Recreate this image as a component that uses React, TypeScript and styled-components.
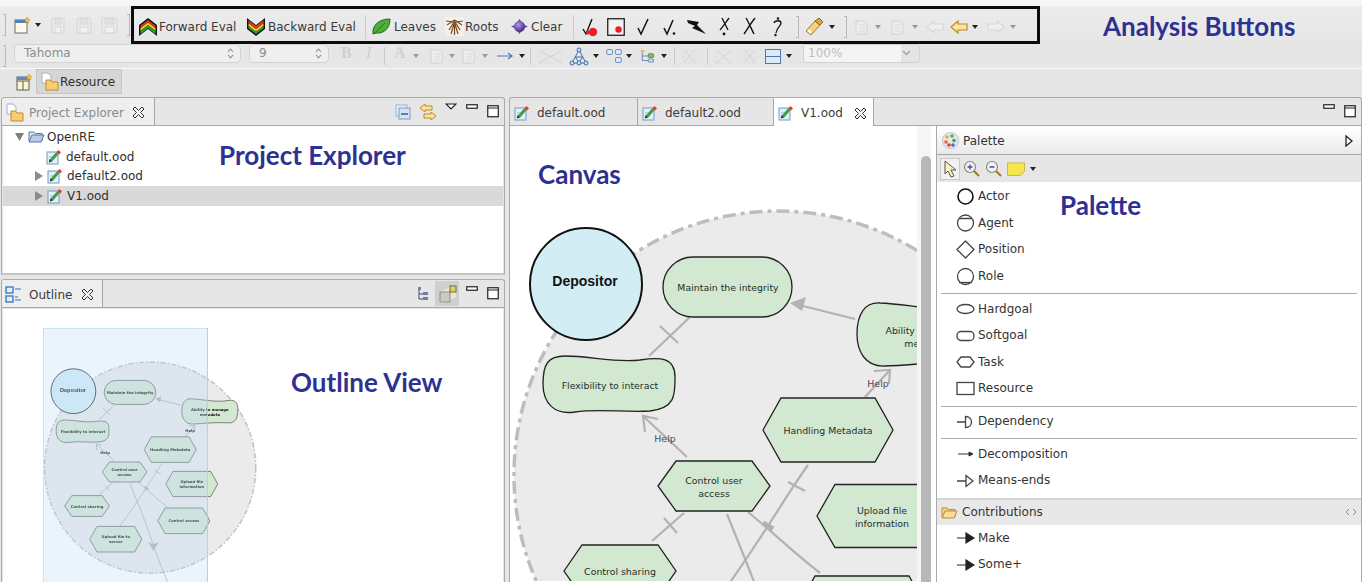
import React from 'react'
import styled, { createGlobalStyle } from 'styled-components'

const GlobalStyle = createGlobalStyle`
  html, body { margin: 0; padding: 0; background: #e6e6e6; }
  body { font-family: "DejaVu Sans", "Liberation Sans", sans-serif; }
`

const UI_FONT = '"DejaVu Sans", "Liberation Sans", sans-serif'

const Page = styled.div`
  width: 1362px;
  height: 582px;
  overflow: hidden;
  background: #e6e6e6;
  display: flex;
  flex-direction: column;
  color: #2b2b2b;
  font-size: 12px;
`

const TopRow = styled.div`
  height: 38px;
  margin-top: 6px;
  padding-left: 3px;
  display: flex;
  align-items: center;
  background: linear-gradient(#ececec, #e6e6e6);
  box-shadow: 0 -6px 0 #f6f6f6;
`

const FormatRow = styled.div`
  height: 24px;
  padding-left: 3px;
  display: flex;
  align-items: center;
`

const PerspectiveRow = styled.div`
  height: 29px;
  border-top: 1px solid #fafafa;
  display: flex;
  align-items: flex-start;
  padding-left: 16px;
  box-sizing: border-box;
`

const AnalysisBox = styled.div`
  width: 909px;
  height: 38px;
  margin-left: 1px;
  padding-top: 3px;
  box-sizing: border-box;
  border: 3px solid #0c0c0c;
  display: flex;
  align-items: center;
  position: relative;
  z-index: 2;
  flex: none;
`

const Slot = styled.svg<{ $gap?: number }>`
  flex: none;
  margin-left: ${p => p.$gap ?? 0}px;
  display: block;
`

const ToolLabel = styled.span<{ $gap: number; $w: number }>`
  flex: none;
  margin-left: ${p => p.$gap}px;
  width: ${p => p.$w}px;
  white-space: nowrap;
  font-size: 12px;
  color: #3a3a3a;
`

const Divider = styled.div<{ $gap: number; $tall?: number }>`
  flex: none;
  margin-left: ${p => p.$gap}px;
  width: 1px;
  height: ${p => p.$tall ?? 24}px;
  background: #cacaca;
`

const Handle = styled.div<{ $gap: number }>`
  flex: none;
  margin-left: ${p => p.$gap}px;
  width: 3px;
  height: 22px;
  box-sizing: border-box;
  border: 1px solid #b8b8b8;
  border-left: none;
`

const Caret = styled.div<{ $gap: number; $pale?: boolean }>`
  flex: none;
  margin-left: ${p => p.$gap}px;
  width: 0;
  height: 0;
  border-left: 3px solid transparent;
  border-right: 3px solid transparent;
  border-top: 4px solid ${p => (p.$pale ? '#9a9a9a' : '#222')};
`

const Annotation = styled.div`
  font-family: "Lato", "Open Sans", sans-serif;
  font-weight: 700;
  font-size: 26px;
  line-height: 30px;
  color: #2e3192;
  white-space: nowrap;
`

const AnalysisTitle = styled(Annotation)`
  margin-left: 63px;
  margin-top: 2px;
`

const FloatNote = styled(Annotation)<{ $x: number; $y: number }>`
  position: absolute;
  left: ${p => p.$x}px;
  top: ${p => p.$y}px;
  z-index: 3;
`

const Combo = styled.div<{ $gap: number; $w: number }>`
  flex: none;
  margin-left: ${p => p.$gap}px;
  margin-top: -6px;
  width: ${p => p.$w}px;
  height: 19px;
  box-sizing: border-box;
  padding: 0 6px 0 9px;
  background: #efefef;
  border: 1px solid #d2d2d2;
  border-radius: 5px;
  display: flex;
  align-items: center;
  justify-content: space-between;
  color: #8c8c8c;
  font-size: 12px;
`

const ZoomCombo = styled(Combo)`
  background: linear-gradient(90deg, #f4f4f4 84%, #e4e4e4 84%);
  color: #bdbdbd;
  padding: 0 8px 0 4px;
  border-radius: 3px;
`

const FakeStyleBtn = styled.span<{ $gap: number; $italic?: boolean }>`
  flex: none;
  margin-left: ${p => p.$gap}px;
  margin-top: -6px;
  width: 12px;
  font-family: "Liberation Serif", serif;
  font-size: 16px;
  font-weight: ${p => (p.$italic ? 400 : 700)};
  font-style: ${p => (p.$italic ? 'italic' : 'normal')};
  color: #d0d0d0;
`

const ResourceBtn = styled.div`
  margin-left: 4px;
  margin-top: 0;
  width: 86px;
  height: 25px;
  box-sizing: border-box;
  background: #d6d6d6;
  border: 1px solid #c6c6c6;
  display: flex;
  align-items: center;
  padding-left: 3px;
  color: #2f2f2f;
  font-size: 12px;
`

const Workspace = styled.div`
  flex: 1;
  min-height: 0;
  display: grid;
  grid-template-columns: 505px 853px;
  column-gap: 4px;
  padding-left: 0;
`

const LeftStack = styled.div`
  display: grid;
  grid-template-rows: 178px 1fr;
  row-gap: 4px;
  padding-left: 1px;
  min-height: 0;
  height: 485px;
`

const Panel = styled.section`
  position: relative;
  border: 1px solid #ababab;
  border-bottom: none;
  border-radius: 3px 3px 0 0;
  background: #e6e6e6;
  display: flex;
  flex-direction: column;
  min-height: 0;
  overflow: hidden;
`

const FramedPanel = styled(Panel)`
  border-bottom: 2px solid #c4c4c4;
`

const TabBar = styled.div`
  height: 28px;
  flex: none;
  display: flex;
  align-items: stretch;
  border-bottom: 1px solid #a8a8a8;
  box-sizing: border-box;
`

const Tab = styled.div<{ $w: number; $active?: boolean; $muted?: boolean }>`
  flex: none;
  width: ${p => p.$w}px;
  box-sizing: border-box;
  display: flex;
  align-items: center;
  padding: 2px 0 0 4px;
  gap: 7px;
  border-right: 1px solid #a8a8a8;
  margin-bottom: ${p => (p.$active ? '-1px' : '0')};
  background: ${p => (p.$active ? '#fff' : 'transparent')};
  color: ${p => (p.$muted ? '#8a8a8a' : '#3a3a3a')};
  font-size: 12px;
  white-space: nowrap;
`

const SideTab = styled(Tab)`
  background: #eeeeee;
  gap: 4px;
  padding-left: 3px;
`

const TabActions = styled.div`
  margin-left: auto;
  display: flex;
  align-items: center;
  padding-right: 5px;
`

const ToggleWrap = styled.div`
  width: 24px;
  height: 25px;
  margin-left: 6px;
  background: #cfcfcf;
  display: flex;
  align-items: center;
  justify-content: center;
`

const TreeArea = styled.div`
  position: relative;
  flex: 1;
  background: #fff;
  margin: 0 1px;
  padding-top: 1px;
`

const TreeRow = styled.div<{ $indent: number; $selected?: boolean }>`
  height: 19.8px;
  display: flex;
  align-items: center;
  padding-left: ${p => p.$indent}px;
  gap: 4px;
  background: ${p => (p.$selected ? '#d9d9d9' : 'transparent')};
  color: #2e2e2e;
  font-size: 12px;
`

const OutlineArea = styled.div`
  position: relative;
  flex: 1;
  background: #fff;
  margin: 1px 1px 0;
  padding: 19px 0 0 40px;
  overflow: hidden;
`

// the thumbnail is a shrunken copy, its labels read as dark smudges
const OutlineSvg = styled.svg`
  display: block;
  filter: blur(0.3px);
  text {
    font-weight: 700;
    fill: #111;
  }
`

const EditorBody = styled.div`
  flex: 1;
  display: flex;
  min-height: 0;
  background: #fff;
`

const Canvas = styled.div`
  position: relative;
  width: 407px;
  flex: none;
  overflow: hidden;
`

const ScrollTrack = styled.div`
  width: 14px;
  flex: none;
  background: #f6f6f6;
  padding: 30px 0 0 4px;
  box-sizing: border-box;
`

const ScrollThumb = styled.div`
  width: 10px;
  height: 100%;
  background: #b7b7b7;
  border-radius: 5px 5px 0 0;
`

const Sash = styled.div`
  width: 5px;
  flex: none;
  background: #fff;
  border-right: 1px solid #a9a9a9;
`

const Palette = styled.aside`
  position: relative;
  flex: 1;
  display: flex;
  flex-direction: column;
  background: #fff;
  padding-top: 1px;
`

const PaletteHead = styled.div`
  height: 28px;
  flex: none;
  box-sizing: border-box;
  display: flex;
  align-items: center;
  padding: 0 8px 0 5px;
  gap: 4px;
  background: linear-gradient(#fff, #e9e9e9);
  border-bottom: 1px solid #a6a6a6;
  font-size: 12px;
  color: #333;
`

const PaletteTools = styled.div`
  height: 27px;
  flex: none;
  display: flex;
  align-items: center;
  background: #e6e6e6;
  padding-left: 3px;
`

const SelectTool = styled.div`
  width: 20px;
  height: 22px;
  background: #f1f1f1;
  border: 1px solid #c8c8c8;
  box-sizing: border-box;
  display: flex;
  align-items: center;
  justify-content: center;
`

const ToolList = styled.div`
  padding-top: 1px;
  flex: none;
`

const ToolRow = styled.div`
  height: 26.6px;
  display: flex;
  align-items: center;
  padding-left: 19px;
  gap: 3px;
  font-size: 12px;
  color: #333;
`

const ToolSep = styled.hr`
  margin: 4px 4px 1px 4px;
  border: none;
  height: 1px;
  background: #aaaaaa;
`

const Drawer = styled.div`
  margin-top: 4px;
  height: 27px;
  flex: none;
  box-sizing: border-box;
  display: flex;
  align-items: center;
  padding: 0 4px;
  gap: 4px;
  border-top: 2px solid #d4d4d4;
  background: #e8e8e8;
  font-size: 12px;
  color: #333;
`

const DrawerPin = styled.span`
  margin-left: auto;
  display: flex;
`

// ---- small icons

type IconProps = { gap?: number }

const FileEdit = ({ gap }: IconProps) => (
  <Slot $gap={gap} width="16" height="16" viewBox="0 0 16 16">
    <rect x="1" y="3" width="11" height="12" fill="#e4eff9" stroke="#6f9cc4" />
    <path d="M3 8h4M3 11h2" stroke="#9dbbd6" />
    <path d="M5 11.5L11.5 4" stroke="#3f9e45" strokeWidth="3" fill="none" />
    <path d="M10.5 3L12.5 1 15 3.5 13 5.5Z" fill="#e53935" />
    <path d="M2.8 13.5L3.6 10 6.2 12.4Z" fill="#333" />
  </Slot>
)

const Folder = ({ gap, open }: IconProps & { open?: boolean }) => (
  <Slot $gap={gap} width="17" height="15" viewBox="0 0 17 15">
    <path d="M1 3h5l1.5 1.5H14V12H1Z" fill={open ? '#dfe6f3' : '#f7d58a'} stroke={open ? '#5d76a8' : '#b98c33'} />
    <path d="M1 13L4 6h12l-3 7Z" fill={open ? '#b9cbe8' : '#fbdc93'} stroke={open ? '#5d76a8' : '#b98c33'} />
  </Slot>
)

const ResourceGlyph = ({ gap }: IconProps) => (
  <Slot $gap={gap} width="20" height="20" viewBox="0 0 20 20">
    <path d="M2 1h6l3 3v7H2Z" fill="#fff" stroke="#9db3cc" />
    <path d="M6 8h4l2 2h6v8H6Z" fill="#f9cd6e" stroke="#b98c33" />
  </Slot>
)

const Chevrons = ({ gap, down }: IconProps & { down?: boolean }) => (
  <Slot $gap={gap} width="20" height="20" viewBox="0 0 20 20">
    <g transform={down ? 'translate(0 20) scale(1 -1)' : undefined}>
      <path d="M10 1L19 8V19L10 12 1 19V8Z" fill="#151515" />
      <path d="M10 3L17.5 8.8V11L10 5.2 2.5 11V8.8Z" fill={down ? '#2aa52a' : '#e53422'} />
      <path d="M10 5.4L17.5 11.2V13.8L10 8 2.5 13.8V11.2Z" fill="#f4d21f" />
      <path d="M10 8.2L17.5 14V17L10 11 2.5 17V14Z" fill={down ? '#e53422' : '#2aa52a'} />
    </g>
  </Slot>
)

const Leaf = ({ gap }: IconProps) => (
  <Slot $gap={gap} width="19" height="19" viewBox="0 0 19 19">
    <path d="M1 17C0 9 6 2 18 2 18 11 12 17 4 16Z" fill="#4fae3a" stroke="#1f6b1b" />
    <path d="M2 17L13 6" stroke="#1f6b1b" fill="none" strokeWidth=".8" />
  </Slot>
)

const Roots = ({ gap }: IconProps) => (
  <Slot $gap={gap} width="19" height="19" viewBox="0 0 19 19">
    <rect width="19" height="19" fill="#f4f1ea" />
    <g stroke="#7a4a1c" strokeWidth="1.2" fill="none">
      <path d="M9.5 3V18M9.5 3L2 8M9.5 3L17 8M9 5L4 13M10 5L15 13M8 5L1 4M11 5L18 4M9 7L6 17M10 7L13 17" />
    </g>
  </Slot>
)

const Sphere = ({ gap }: IconProps) => (
  <Slot $gap={gap} width="17" height="17" viewBox="0 0 17 17">
    <defs>
      <radialGradient id="clearBall" cx=".4" cy=".35" r=".7">
        <stop offset="0" stopColor="#b59ae0" />
        <stop offset="1" stopColor="#3a2380" />
      </radialGradient>
    </defs>
    <path d="M0 8.5L5 6.5 8.5 1 12 6.5 17 8.5 12 10.5 8.5 16 5 10.5Z" fill="#5c45a8" />
    <circle cx="8.5" cy="8.5" r="5.5" fill="url(#clearBall)" />
  </Slot>
)

const MarkPaths: Record<string, React.ReactNode> = {
  check: <path d="M3 11L6 17 13 2" fill="none" stroke="#111" strokeWidth="1.5" />,
  checkDot: (
    <>
      <path d="M2 11L5 17 11 3" fill="none" stroke="#111" strokeWidth="1.5" />
      <circle cx="12" cy="16.5" r="1.3" fill="#111" />
    </>
  ),
  bolt: <path d="M0 3L12 5 10 8 19 17 5 11 8 9 1 6Z" fill="#111" />,
  crossDot: (
    <>
      <path d="M4 1C6 5 8 9 10 13M11 1C8 5 5 10 2 13" fill="none" stroke="#111" strokeWidth="1.3" />
      <circle cx="6" cy="17" r="1.4" fill="#111" />
    </>
  ),
  cross: <path d="M4 1C7 6 9 11 12 17M13 1C9 6 6 11 2 17" fill="none" stroke="#111" strokeWidth="1.4" />,
  query: (
    <>
      <circle cx="7" cy="1.5" r="1.2" fill="#111" />
      <path d="M3 6C4 3 10 3 10 6 10 9 6 10 5 16" fill="none" stroke="#111" strokeWidth="1.3" />
      <circle cx="4.5" cy="18" r="1.2" fill="#111" />
    </>
  ),
}

const Mark = ({ gap, kind, w }: IconProps & { kind: string; w: number }) => (
  <Slot $gap={gap} width={w} height="20" viewBox={`0 0 ${w} 20`}>
    {MarkPaths[kind]}
  </Slot>
)

const CheckRed = ({ gap }: IconProps) => (
  <Slot $gap={gap} width="18" height="20" viewBox="0 0 18 20">
    <path d="M1 12L4 17 10 2" fill="none" stroke="#111" strokeWidth="1.4" />
    <circle cx="11" cy="15" r="4.2" fill="#ee1c25" />
    <circle cx="6" cy="15.5" r="2" fill="#ee1c25" />
  </Slot>
)

const BoxRed = ({ gap }: IconProps) => (
  <Slot $gap={gap} width="18" height="20" viewBox="0 0 18 20">
    <rect x=".75" y="1.75" width="16.5" height="16.5" fill="#f2f2f2" stroke="#111" strokeWidth="1.2" />
    <circle cx="11.5" cy="12.5" r="3.2" fill="#ee1c25" />
  </Slot>
)

const Flashlight = ({ gap }: IconProps) => (
  <Slot $gap={gap} width="19" height="18" viewBox="0 0 19 18">
    <path d="M1 13L10 3l5 4-9 10Z" fill="#f5d27d" stroke="#a67c2a" />
    <path d="M10 3L14 0l4 4-3 3Z" fill="#dca83e" stroke="#8a6520" />
    <path d="M3 12l3 3" stroke="#fff" strokeWidth="2" />
  </Slot>
)

const PaleDoc = ({ gap }: IconProps) => (
  <Slot $gap={gap} width="18" height="18" viewBox="0 0 18 18">
    <path d="M3 3h8l3 3v10H3Z" fill="#ededed" stroke="#d2d2d2" />
    <path d="M6 7h6M6 10h6M6 13h6" stroke="#d8d8d8" />
  </Slot>
)

const BlockArrow = ({ gap, dir, tone }: IconProps & { dir: 'left' | 'right'; tone: 'pale' | 'gold' }) => (
  <Slot $gap={gap} width="18" height="14" viewBox="0 0 18 14">
    <path
      d="M1 7L8 1v3h9v6H8v3Z"
      transform={dir === 'right' ? 'translate(18 0) scale(-1 1)' : undefined}
      fill={tone === 'gold' ? '#fbe3a1' : '#efefef'}
      stroke={tone === 'gold' ? '#c08a1e' : '#d8d8d8'}
      strokeWidth="1.2"
    />
  </Slot>
)

const Disk = ({ gap, w }: IconProps & { w: number }) => (
  <Slot $gap={gap} width={w} height="17" viewBox={`0 0 ${w} 17`}>
    <rect x="1" y="1" width={w - 3} height="15" rx="1" fill="#ebebeb" stroke="#d3d3d3" />
    <rect x="4" y="2" width={w - 9} height="5" fill="#e2e2e2" stroke="#d6d6d6" />
    <rect x="4" y="10" width={w - 9} height="6" fill="#f2f2f2" stroke="#d6d6d6" />
  </Slot>
)

const NewWizard = ({ gap }: IconProps) => (
  <Slot $gap={gap} width="16" height="17" viewBox="0 0 16 17">
    <rect x="1" y="3" width="12" height="13" fill="#fffbe6" stroke="#6b6b6b" />
    <rect x="1" y="3" width="12" height="3" fill="#4f7fc0" />
    <path d="M13 0l1 2 2 .5-1.5 1.5.3 2-1.8-1-1.8 1 .3-2L10 2.5l2-.5Z" fill="#f0c23c" stroke="#a97f12" strokeWidth=".4" />
  </Slot>
)

const NewPerspective = ({ gap }: IconProps) => (
  <Slot $gap={gap} width="16" height="17" viewBox="0 0 16 17" style={{ marginTop: 5 }}>
    <rect x="1" y="3" width="12" height="13" fill="#fdf3cc" stroke="#5f5f5f" />
    <path d="M1 7h12M7 7v9" stroke="#5f5f5f" />
    <rect x="1" y="3" width="12" height="3" fill="#5f88bf" />
    <path d="M13 0l1 2 2 .5-1.5 1.5.3 2-1.8-1-1.8 1 .3-2L10 2.5l2-.5Z" fill="#f0c23c" stroke="#a97f12" strokeWidth=".4" />
  </Slot>
)

const PaleGrid = ({ gap, w }: IconProps & { w: number }) => (
  <Slot $gap={gap} width={w} height="17" viewBox={`0 0 ${w} 17`}>
    <path d={`M2 15L${w - 3} 3M3 3L${w - 2} 15`} stroke="#d2d2d2" fill="none" />
    <rect x="2" y="2" width={w - 4} height="13" fill="none" stroke="#dcdcdc" strokeDasharray="2 2" />
  </Slot>
)

const MinBtn = ({ gap }: IconProps) => (
  <Slot $gap={gap} width="12" height="6" viewBox="0 0 12 6" style={{ alignSelf: 'flex-start', marginTop: 6 }}>
    <rect x=".75" y=".75" width="10.5" height="3.5" fill="#fff" stroke="#222" strokeWidth="1.2" />
  </Slot>
)

const MaxBtn = ({ gap }: IconProps) => (
  <Slot $gap={gap} width="12" height="13" viewBox="0 0 12 13">
    <rect x=".75" y=".75" width="10.5" height="11" fill="#fff" stroke="#222" strokeWidth="1.2" />
    <path d="M1 3h10" stroke="#222" strokeWidth="1.2" />
  </Slot>
)

const CloseX = ({ gap }: IconProps) => (
  <Slot $gap={gap} width="13" height="13" viewBox="0 0 13 13">
    <path d="M1 3l2-2 3.5 3.5L10 1l2 2-3.5 3.5L12 10l-2 2-3.5-3.5L3 12l-2-2 3.5-3.5Z" fill="#f4f4f4" stroke="#333" strokeWidth="1" />
  </Slot>
)

const TwistRight = () => (
  <Slot width="8" height="10" viewBox="0 0 8 10">
    <path d="M0 0l8 5-8 5Z" fill="#8b8b8b" />
  </Slot>
)

const TwistDown = () => (
  <Slot width="9" height="8" viewBox="0 0 9 8">
    <path d="M0 0h9L4.5 8Z" fill="#808080" />
  </Slot>
)

const UpDown = () => (
  <svg width="7" height="13" viewBox="0 0 7 13">
    <path d="M1 5l2.5-3L6 5M1 8l2.5 3L6 8" fill="none" stroke="#8a8a8a" strokeWidth="1.1" />
  </svg>
)

const PaletteIcon = ({ kind }: { kind: string }) => {
  const s = { fill: 'none', stroke: '#444', strokeWidth: 1.3 }
  return (
    <Slot width="19" height="19" viewBox="0 0 19 19">
      {kind === 'actor' && <circle cx="9.5" cy="9.5" r="7.5" fill="none" stroke="#111" strokeWidth="1.6" />}
      {kind === 'agent' && (
        <>
          <circle cx="9.5" cy="10" r="8" {...s} />
          <path d="M3 5.5h13" {...s} />
        </>
      )}
      {kind === 'position' && <path d="M9.5 1L18 9.5 9.5 18 1 9.5Z" {...s} strokeLinejoin="round" />}
      {kind === 'role' && (
        <>
          <circle cx="9.5" cy="9.5" r="8" {...s} />
          <path d="M3 15.5h13" {...s} />
        </>
      )}
      {kind === 'hardgoal' && <ellipse cx="9.5" cy="10" rx="8.5" ry="4.5" {...s} />}
      {kind === 'softgoal' && <rect x="1" y="5.5" width="17" height="9" rx="4" {...s} />}
      {kind === 'task' && <path d="M5 5h9l4 5-4 5H5l-4-5Z" {...s} />}
      {kind === 'resource' && <rect x="1" y="3.5" width="17" height="12" {...s} />}
      {kind === 'dependency' && <path d="M1 10h8M9.5 4.5c8 0 8 11 0 11Z" {...s} />}
      {kind === 'decomposition' && <path d="M2 10h14M13 8l4 2-4 2Z" fill="#333" stroke="#333" strokeWidth="1" />}
      {kind === 'means' && <path d="M1 10h9M10 4.5L17 10l-7 5.5Z" {...s} />}
      {kind === 'make' && <path d="M1 10h9M10 5l8 5-8 5Z" fill="#222" stroke="#222" strokeWidth="1.2" />}
    </Slot>
  )
}

// ---- the goal model, same drawing for the canvas and the outline thumbnail

const LABEL = { fontFamily: UI_FONT, fontSize: 9.4, fill: '#1f2f2a', textAnchor: 'middle' as const }
const NODE = { fill: '#d3e8d1', stroke: '#222', strokeWidth: 1.3 }
const EDGE = { fill: 'none', stroke: '#b2b2b2', strokeWidth: 2.2 }

const Lines = ({ cx, cy, lines }: { cx: number; cy: number; lines: string[] }) => (
  <>
    {lines.map((l, i) => (
      <text key={l} x={cx} y={cy + 4 + (i - (lines.length - 1) / 2) * 13} {...LABEL}>
        {l}
      </text>
    ))}
  </>
)

const Hex = ({ cx, cy, w, h, lines }: { cx: number; cy: number; w: number; h: number; lines: string[] }) => {
  const x0 = cx - w / 2
  const x1 = cx + w / 2
  const y0 = cy - h / 2
  const y1 = cy + h / 2
  return (
    <>
      <polygon points={`${x0},${cy} ${x0 + 18},${y0} ${x1 - 18},${y0} ${x1},${cy} ${x1 - 18},${y1} ${x0 + 18},${y1}`} {...NODE} />
      <Lines cx={cx} cy={cy} lines={lines} />
    </>
  )
}

const OpenHead = ({ d }: { d: string }) => <path d={d} {...EDGE} />

const GoalModel = () => (
  <g>
    <circle cx="778" cy="476" r="264" fill="#ebebeb" stroke="#bdbdbd" strokeWidth="3.5" strokeDasharray="13 5 4 5" />

    <path d="M649 357L690 318" {...EDGE} />
    <path d="M660 327L678 344" {...EDGE} />
    <path d="M855 320L795 305" {...EDGE} />
    <path d="M790 304L806 298 802 312Z" fill="#b2b2b2" />
    <path d="M865 398L890 371" {...EDGE} />
    <OpenHead d="M874 372L890 371 889 385" />
    <path d="M687 458L643 417" {...EDGE} />
    <OpenHead d="M645 433L643 417 658 420" />
    <path d="M652 542L684 514" {...EDGE} />
    <path d="M664 519L677 534" {...EDGE} />
    <path d="M808 466C780 505 760 545 700 625" {...EDGE} />
    <path d="M788 483L805 492" {...EDGE} />
    <path d="M763 524L773 530" stroke="#b2b2b2" strokeWidth="5" fill="none" />
    <path d="M727 515C745 560 770 620 785 668 795 700 810 730 822 765" {...EDGE} />
    <path d="M748 513C775 535 795 555 820 574" {...EDGE} />
    <path d="M772 660C778 668 790 668 800 662L786 684Z" fill="#b2b2b2" />

    <circle cx="586" cy="285" r="56" fill="#d3edf5" stroke="#111" strokeWidth="2" />
    <text x="585" y="287" fontFamily="Liberation Sans, sans-serif" fontWeight="700" fontSize="14" fill="#111" textAnchor="middle">
      Depositor
    </text>

    <rect x="663" y="258" width="129" height="60" rx="30" {...NODE} />
    <Lines cx={728} cy={288} lines={['Maintain the integrity']} />

    <path d="M565 357C590 357 615 364 640 361 660 358 675 358 675 378 675 395 676 409 650 412 625 414 600 409 575 413 555 416 543 405 543 385 543 365 548 357 565 357Z" {...NODE} />
    <Lines cx={610} cy={386} lines={['Flexibility to interact']} />

    <path d="M880 304C910 305 940 314 975 308 995 305 998 320 997 335 996 355 990 366 970 364 940 362 915 366 885 367 865 368 857 352 857 335 857 315 865 303 880 304Z" {...NODE} />
    <Lines cx={927} cy={337} lines={['Ability to manage', 'metadata']} />

    <Hex cx={828} cy={431} w={130} h={64} lines={['Handling Metadata']} />
    <Hex cx={714} cy={487} w={112} h={50} lines={['Control user', 'access']} />
    <Hex cx={882} cy={517} w={130} h={63} lines={['Upload file', 'information']} />
    <Hex cx={620} cy={572} w={112} h={52} lines={['Control sharing']} />
    <Hex cx={862} cy={609} w={130} h={64} lines={['Control access']} />
    <Hex cx={692} cy={655} w={130} h={64} lines={['Upload file to', 'server']} />

    <text x="665" y="443" {...LABEL} fill="#444a60">Help</text>
    <text x="878" y="388" {...LABEL} fill="#444a60">Help</text>
  </g>
)

const PALETTE_GROUPS: [string, string][][] = [
  [['actor', 'Actor'], ['agent', 'Agent'], ['position', 'Position'], ['role', 'Role']],
  [['hardgoal', 'Hardgoal'], ['softgoal', 'Softgoal'], ['task', 'Task'], ['resource', 'Resource']],
  [['dependency', 'Dependency']],
  [['decomposition', 'Decomposition'], ['means', 'Means-ends']],
]

export default function App() {
  return (
    <Page>
      <GlobalStyle />

      <TopRow>
        <Handle $gap={0} />
        <NewWizard gap={8} />
        <Caret $gap={5} />
        <Disk gap={10} w={15} />
        <Disk gap={10} w={17} />
        <Disk gap={8} w={18} />
        <Handle $gap={8} />
        <AnalysisBox>
          <Chevrons gap={4} />
          <ToolLabel $gap={1} $w={77}>Forward Eval</ToolLabel>
          <Chevrons gap={10} down />
          <ToolLabel $gap={2} $w={87}>Backward Eval</ToolLabel>
          <Divider $gap={10} />
          <Leaf gap={6} />
          <ToolLabel $gap={3} $w={41}>Leaves</ToolLabel>
          <Roots gap={10} />
          <ToolLabel $gap={1} $w={35}>Roots</ToolLabel>
          <Sphere gap={11} />
          <ToolLabel $gap={3} $w={33}>Clear</ToolLabel>
          <Divider $gap={9} />
          <CheckRed gap={8} />
          <BoxRed gap={7} />
          <Mark gap={10} kind="check" w={16} />
          <Mark gap={11} kind="checkDot" w={16} />
          <Mark gap={9} kind="bolt" w={19} />
          <Mark gap={12} kind="crossDot" w={14} />
          <Mark gap={10} kind="cross" w={15} />
          <Mark gap={14} kind="query" w={13} />
          <Handle $gap={12} />
          <Flashlight gap={6} />
          <Caret $gap={5} />
          <Handle $gap={9} />
          <PaleDoc gap={6} />
          <Caret $gap={4} $pale />
          <PaleDoc gap={8} />
          <Caret $gap={5} $pale />
          <BlockArrow gap={8} dir="left" tone="pale" />
          <BlockArrow gap={6} dir="left" tone="gold" />
          <Caret $gap={4} />
          <BlockArrow gap={9} dir="right" tone="pale" />
          <Caret $gap={5} $pale />
        </AnalysisBox>
        <AnalysisTitle>Analysis Buttons</AnalysisTitle>
      </TopRow>

      <FormatRow>
        <Handle $gap={0} />
        <Combo $gap={8} $w={227}>
          Tahoma
          <UpDown />
        </Combo>
        <Combo $gap={8} $w={80}>
          9
          <UpDown />
        </Combo>
        <FakeStyleBtn $gap={12}>B</FakeStyleBtn>
        <FakeStyleBtn $gap={13} $italic>I</FakeStyleBtn>
        <Divider $gap={6} $tall={18} />
        <FakeStyleBtn $gap={9}>A</FakeStyleBtn>
        <Caret $gap={7} $pale />
        <PaleDoc gap={9} />
        <Caret $gap={3} $pale />
        <PaleDoc gap={5} />
        <Caret $gap={4} $pale />
        <Slot $gap={9} width="16" height="10" viewBox="0 0 16 10">
          <path d="M0 5h14M11 2l4 3-4 3" fill="none" stroke="#4a78b8" strokeWidth="1.2" />
        </Slot>
        <Caret $gap={6} />
        <Divider $gap={5} $tall={18} />
        <PaleGrid gap={6} w={27} />
        <Slot $gap={5} width="20" height="19" viewBox="0 0 20 19">
          <path d="M3 16L10 3l7 13ZM6 10h8M6.5 10L10 16l3.5-6" fill="none" stroke="#3d6fb3" strokeWidth="1" />
          <circle cx="3" cy="16" r="2" fill="#cfe0f3" stroke="#3d6fb3" />
          <circle cx="17" cy="16" r="2" fill="#cfe0f3" stroke="#3d6fb3" />
          <circle cx="10" cy="3" r="2" fill="#cfe0f3" stroke="#3d6fb3" />
          <circle cx="10" cy="16" r="2" fill="#cfe0f3" stroke="#3d6fb3" />
        </Slot>
        <Caret $gap={4} />
        <Slot $gap={7} width="16" height="18" viewBox="0 0 20 18">
          <rect x="1" y="1" width="7" height="6" rx="1" fill="#e3edf8" stroke="#3d6fb3" />
          <rect x="12" y="1" width="7" height="6" rx="1" fill="#e3edf8" stroke="#3d6fb3" />
          <rect x="12" y="11" width="7" height="6" rx="1" fill="#e3edf8" stroke="#3d6fb3" />
        </Slot>
        <Caret $gap={4} />
        <Slot $gap={8} width="18" height="18" viewBox="0 0 24 18">
          <path d="M3 4v11h8M3 9h8M14 9h5" fill="none" stroke="#3d6fb3" />
          <rect x="1" y="1" width="5" height="3" fill="#f0c23c" />
          <rect x="11" y="6" width="7" height="5" rx="1" fill="#7dbd5a" stroke="#4a8a2c" />
          <rect x="11" y="13" width="7" height="4" rx="1" fill="#cfe0f3" stroke="#3d6fb3" />
        </Slot>
        <Caret $gap={3} />
        <Divider $gap={7} $tall={18} />
        <PaleGrid gap={7} w={15} />
        <Divider $gap={10} $tall={18} />
        <PaleGrid gap={6} w={19} />
        <PaleGrid gap={10} w={14} />
        <Slot $gap={8} width="16" height="15" viewBox="0 0 16 15">
          <rect x=".5" y=".5" width="15" height="14" fill="#dfe9f5" stroke="#4a78b8" />
          <path d="M0 7.5h16" stroke="#4a78b8" />
        </Slot>
        <Caret $gap={5} />
        <ZoomCombo $gap={11} $w={117}>
          100%
          <svg width="9" height="6" viewBox="0 0 9 6">
            <path d="M1 1l3.5 3.5L8 1" fill="none" stroke="#a0a0a0" strokeWidth="1.3" />
          </svg>
        </ZoomCombo>
      </FormatRow>

      <PerspectiveRow>
        <NewPerspective />
        <ResourceBtn>
          <ResourceGlyph />
          Resource
        </ResourceBtn>
      </PerspectiveRow>

      <Workspace>
        <LeftStack>
          <FramedPanel>
            <TabBar>
              <SideTab $w={153} $muted>
                <ResourceGlyph />
                <span>Project Explorer</span>
                <CloseX gap={4} />
              </SideTab>
              <TabActions>
                <Slot width="16" height="16" viewBox="0 0 16 16">
                  <rect x="1" y="1" width="11" height="11" fill="#e8eef6" stroke="#9bb3cf" />
                  <rect x="4" y="4" width="11" height="11" fill="#d7e3f2" stroke="#7e9cc0" />
                  <path d="M6 10h7" stroke="#2f5e9a" strokeWidth="1.4" />
                </Slot>
                <Slot $gap={8} width="18" height="18" viewBox="0 0 18 18">
                  <path d="M1 5l5-4v2h7v4H6v2ZM17 13l-5 4v-2H5v-4h7V9Z" fill="#fbe3a1" stroke="#c08a1e" />
                </Slot>
                <Slot $gap={8} width="12" height="18" viewBox="0 0 12 18" style={{ marginBottom: 8 }}>
                  <path d="M1 5h10L6 10Z" fill="#fff" stroke="#222" strokeWidth="1.2" />
                </Slot>
                <MinBtn gap={9} />
                <MaxBtn gap={9} />
              </TabActions>
            </TabBar>
            <TreeArea>
              <TreeRow $indent={12}>
                <TwistDown />
                <Folder open />
                <span style={{ marginLeft: -2 }}>OpenRE</span>
              </TreeRow>
              <TreeRow $indent={43}>
                <FileEdit />
                <span>default.ood</span>
              </TreeRow>
              <TreeRow $indent={32}>
                <TwistRight />
                <FileEdit />
                <span>default2.ood</span>
              </TreeRow>
              <TreeRow $indent={32} $selected>
                <TwistRight />
                <FileEdit />
                <span>V1.ood</span>
              </TreeRow>
              <FloatNote $x={216} $y={14}>Project Explorer</FloatNote>
            </TreeArea>
          </FramedPanel>

          <Panel>
            <TabBar>
              <SideTab $w={101}>
                <Slot width="17" height="17" viewBox="0 0 17 17">
                  <rect x="1" y="1" width="7" height="6" fill="#e3edf8" stroke="#2f76c4" strokeWidth="1.3" />
                  <rect x="1" y="10" width="7" height="6" fill="#e3edf8" stroke="#2f76c4" strokeWidth="1.3" />
                  <path d="M10 3h6M10 11h3M10 14h6" stroke="#2f76c4" strokeWidth="1.2" />
                </Slot>
                <span style={{ marginLeft: 3 }}>Outline</span>
                <CloseX gap={5} />
              </SideTab>
              <TabActions>
                <Slot width="12" height="14" viewBox="0 0 12 14">
                  <path d="M2 2v10h4M2 7h4" fill="none" stroke="#4a4a6a" />
                  <rect x="6" y="5" width="5" height="3" fill="#6f7fb0" />
                  <rect x="6" y="10" width="5" height="3" fill="#6f7fb0" />
                  <rect x="1" y="0" width="3" height="3" fill="#6f7fb0" />
                </Slot>
                <ToggleWrap>
                  <Slot width="20" height="20" viewBox="0 0 20 20">
                    <path d="M3 8L15 2h4v11L8 19H3Z" fill="#e7e8c4" />
                    <rect x="3" y="8" width="10" height="10" fill="#c9c9c9" stroke="#8e8e8e" />
                    <rect x="13" y="2" width="6" height="6" fill="#e9d24e" stroke="#666" />
                  </Slot>
                </ToggleWrap>
                <MinBtn gap={7} />
                <MaxBtn gap={9} />
              </TabActions>
            </TabBar>
            <OutlineArea>
              <OutlineSvg width="224" height="256" viewBox="510 127 560 640">
                <GoalModel />
                <rect x="510" y="127" width="411" height="650" fill="#bcdcf8" fillOpacity=".3" stroke="#a9d0ee" strokeWidth="2.5" />
              </OutlineSvg>
              <FloatNote $x={288} $y={58}>Outline View</FloatNote>
            </OutlineArea>
          </Panel>
        </LeftStack>

        <Panel>
          <TabBar>
            <Tab $w={128}>
              <FileEdit />
              <span>default.ood</span>
            </Tab>
            <Tab $w={136}>
              <FileEdit />
              <span>default2.ood</span>
            </Tab>
            <Tab $w={100} $active>
              <FileEdit />
              <span>V1.ood</span>
              <CloseX gap={4} />
            </Tab>
            <TabActions>
              <MinBtn />
              <MaxBtn gap={9} />
            </TabActions>
          </TabBar>
          <EditorBody>
            <Canvas>
              <svg width="407" height="455" viewBox="510 127 407 455">
                <GoalModel />
              </svg>
              <FloatNote $x={28} $y={33}>Canvas</FloatNote>
            </Canvas>
            <ScrollTrack>
              <ScrollThumb />
            </ScrollTrack>
            <Sash />
            <Palette>
              <PaletteHead>
                <Slot width="17" height="17" viewBox="0 0 17 17">
                  <circle cx="8.5" cy="8.5" r="8" fill="#e4e9f2" stroke="#b8c2d4" />
                  <circle cx="5" cy="5" r="1.8" fill="#f5a623" />
                  <circle cx="10" cy="4" r="1.8" fill="#4caf50" />
                  <circle cx="4" cy="10" r="1.8" fill="#f0632c" />
                  <circle cx="12" cy="8.5" r="1.8" fill="#43a047" />
                  <circle cx="7" cy="13" r="1.8" fill="#e53935" />
                  <circle cx="11" cy="13" r="1.8" fill="#3f6fc4" />
                </Slot>
                Palette
                <Slot width="8" height="12" viewBox="0 0 8 12" style={{ marginLeft: 'auto' }}>
                  <path d="M1 1l6 5-6 5Z" fill="#fff" stroke="#222" strokeWidth="1.3" />
                </Slot>
              </PaletteHead>
              <PaletteTools>
                <SelectTool>
                  <svg width="13" height="18" viewBox="0 0 13 18">
                    <path d="M1 1v13l3-3 3 6 3-1-3-6h5Z" fill="#fbf3c4" stroke="#555" />
                  </svg>
                </SelectTool>
                <Slot $gap={3} width="17" height="17" viewBox="0 0 17 17">
                  <circle cx="7" cy="7" r="5.5" fill="#f3f3f3" stroke="#8a8a6a" strokeWidth="1.2" />
                  <path d="M4.5 7h5M7 4.5v5" stroke="#3d4fb3" strokeWidth="1.4" />
                  <path d="M11 11l5 5" stroke="#9a7a2a" strokeWidth="2" />
                </Slot>
                <Slot $gap={5} width="17" height="17" viewBox="0 0 17 17">
                  <circle cx="7" cy="7" r="5.5" fill="#f3f3f3" stroke="#8a8a6a" strokeWidth="1.2" />
                  <path d="M4.5 7h5" stroke="#3d4fb3" strokeWidth="1.4" />
                  <path d="M11 11l5 5" stroke="#9a7a2a" strokeWidth="2" />
                </Slot>
                <Slot $gap={5} width="18" height="14" viewBox="0 0 18 14">
                  <path d="M.5 1h17v8l-4 4.5H.5Z" fill="#f7e64a" stroke="#c9b94a" />
                </Slot>
                <Caret $gap={5} />
              </PaletteTools>
              <ToolList>
                {PALETTE_GROUPS.map((group, i) => (
                  <React.Fragment key={group[0][0]}>
                    {i > 0 && <ToolSep />}
                    {group.map(([kind, label]) => (
                      <ToolRow key={kind}>
                        <PaletteIcon kind={kind} />
                        {label}
                      </ToolRow>
                    ))}
                  </React.Fragment>
                ))}
              </ToolList>
              <Drawer>
                <Folder />
                Contributions
                <DrawerPin>
                  <svg width="12" height="8" viewBox="0 0 12 8">
                    <path d="M4 1L1 4l3 3M8 1l3 3-3 3" fill="none" stroke="#888" />
                  </svg>
                </DrawerPin>
              </Drawer>
              <ToolRow>
                <PaletteIcon kind="make" />
                Make
              </ToolRow>
              <ToolRow>
                <PaletteIcon kind="make" />
                Some+
              </ToolRow>
              <FloatNote $x={123} $y={64}>Palette</FloatNote>
            </Palette>
          </EditorBody>
        </Panel>
      </Workspace>
    </Page>
  )
}
